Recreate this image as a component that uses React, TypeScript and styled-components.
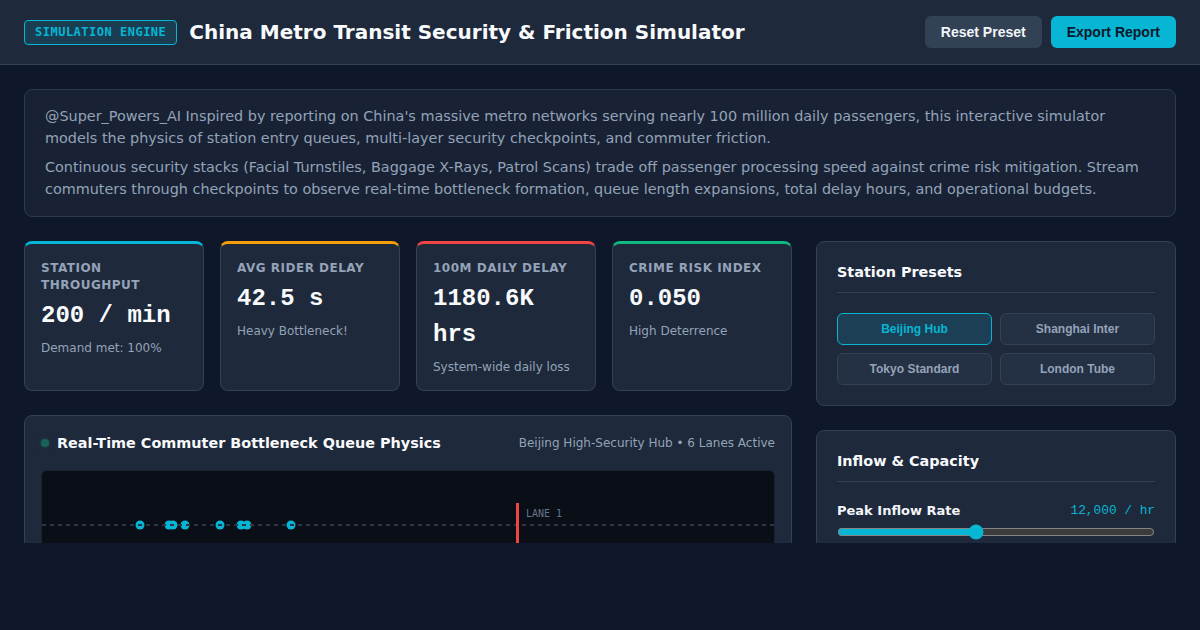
import React from "react";
import styled, { createGlobalStyle } from "styled-components";

const GlobalStyle = createGlobalStyle`
  html, body {
    margin: 0;
    padding: 0;
    background: #0f172a;
    font-family: "DejaVu Sans", sans-serif;
  }
  * { box-sizing: border-box; }
`;

const stats = [
  { label: "Station Throughput", value: "200 / min", sub: "Demand met: 100%", accent: "#06b6d4" },
  { label: "Avg Rider Delay", value: "42.5 s", sub: "Heavy Bottleneck!", accent: "#f59e0b" },
  { label: "100M Daily Delay", value: "1180.6K hrs", sub: "System-wide daily loss", accent: "#ef4444" },
  { label: "Crime Risk Index", value: "0.050", sub: "High Deterrence", accent: "#10b981" },
];

const presets = ["Beijing Hub", "Shanghai Inter", "Tokyo Standard", "London Tube"];

// queue dots on lane 1, x offsets inside the canvas
const riders = [98, 127, 131, 143, 178, 199, 205, 249];

export default function App() {
  return (
    <Page>
      <GlobalStyle />
      <Header>
        <HeaderLeft>
          <Badge>SIMULATION ENGINE</Badge>
          <Title>China Metro Transit Security &amp; Friction Simulator</Title>
        </HeaderLeft>
        <HeaderActions>
          <HeaderButton>Reset Preset</HeaderButton>
          <HeaderButton $primary>Export Report</HeaderButton>
        </HeaderActions>
      </Header>

      <Main>
        <Intro>
          <p>
            @Super_Powers_AI Inspired by reporting on China's massive metro networks serving nearly 100 million daily
            passengers, this interactive simulator models the physics of station entry queues, multi-layer security
            checkpoints, and commuter friction.
          </p>
          <p>
            Continuous security stacks (Facial Turnstiles, Baggage X-Rays, Patrol Scans) trade off passenger processing
            speed against crime risk mitigation. Stream commuters through checkpoints to observe real-time bottleneck
            formation, queue length expansions, total delay hours, and operational budgets.
          </p>
        </Intro>

        <Layout>
          <LeftCol>
            <StatGrid>
              {stats.map((s) => (
                <StatCard key={s.label} $accent={s.accent}>
                  <StatLabel>{s.label}</StatLabel>
                  <StatValue>{s.value}</StatValue>
                  <StatSub>{s.sub}</StatSub>
                </StatCard>
              ))}
            </StatGrid>

            <Panel>
              <QueueHead>
                <QueueTitle>
                  <LiveDot />
                  Real-Time Commuter Bottleneck Queue Physics
                </QueueTitle>
                <QueueMeta>Beijing High-Security Hub • 6 Lanes Active</QueueMeta>
              </QueueHead>
              <Canvas>
                <svg width="732" height="200">
                  {riders.map((x, i) => (
                    <circle key={i} cx={x} cy={54} r={4.5} fill="#06b6d4" />
                  ))}
                  <line x1={0} y1={54} x2={732} y2={54} stroke="#2b3545" strokeWidth={2} strokeDasharray="4 4" />
                  <rect x={474} y={32} width={3} height={170} fill="#ef4444" />
                  <LaneText x={484} y={46}>LANE 1</LaneText>
                </svg>
              </Canvas>
            </Panel>
          </LeftCol>

          <RightCol>
            <SidePanel>
              <PanelTitle>Station Presets</PanelTitle>
              <PresetGrid>
                {presets.map((p, i) => (
                  <PresetButton key={p} $active={i === 0}>
                    {p}
                  </PresetButton>
                ))}
              </PresetGrid>
            </SidePanel>

            <SidePanel>
              <PanelTitle>Inflow &amp; Capacity</PanelTitle>
              <ControlRow>
                <ControlLabel>Peak Inflow Rate</ControlLabel>
                <ControlValue>12,000 / hr</ControlValue>
              </ControlRow>
              <Slider type="range" min={2000} max={25000} step={500} defaultValue={12000} />
            </SidePanel>
          </RightCol>
        </Layout>
      </Main>
    </Page>
  );
}

const Page = styled.div`
  height: 543px;
  overflow: hidden;
  background: #0f172a;
  color: #f1f5f9;
`;

const Header = styled.header`
  display: flex;
  align-items: center;
  justify-content: space-between;
  height: 65px;
  padding: 0 24px;
  background: #1e293b;
  border-bottom: 1px solid #334155;
`;

const HeaderLeft = styled.div`
  display: flex;
  align-items: center;
  gap: 12px;
`;

const Badge = styled.span`
  font-family: "DejaVu Sans Mono", monospace;
  font-size: 12px;
  font-weight: bold;
  letter-spacing: 0.5px;
  color: #06b6d4;
  background: rgba(6, 182, 212, 0.15);
  border: 1px solid #06b6d4;
  border-radius: 4px;
  padding: 4px 10px;
  line-height: 15px;
`;

const Title = styled.h1`
  margin: 0;
  font-size: 20px;
  font-weight: bold;
  color: #f8fafc;
`;

const HeaderActions = styled.div`
  display: flex;
  gap: 9px;
`;

const HeaderButton = styled.button<{ $primary?: boolean }>`
  font-family: "Liberation Sans", Arial, sans-serif;
  font-size: 14px;
  font-weight: bold;
  line-height: 16px;
  padding: 8px 16px;
  border: none;
  border-radius: 6px;
  background: ${(p) => (p.$primary ? "#06b6d4" : "#334155")};
  color: ${(p) => (p.$primary ? "#0f172a" : "#f1f5f9")};
`;

const Main = styled.main`
  padding: 24px;
  display: flex;
  flex-direction: column;
  gap: 24px;
`;

const Intro = styled.section`
  background: #182234;
  border: 1px solid #2b3a50;
  border-radius: 8px;
  padding: 15px 20px 16px;
  color: #94a3b8;
  font-size: 14.4px;
  line-height: 22px;

  p {
    margin: 0;
  }
  p + p {
    margin-top: 7px;
  }
`;

const Layout = styled.div`
  display: grid;
  grid-template-columns: 1fr 360px;
  gap: 24px;
`;

const LeftCol = styled.div`
  display: flex;
  flex-direction: column;
  gap: 24px;
`;

const RightCol = styled.div`
  display: flex;
  flex-direction: column;
  gap: 24px;
`;

const StatGrid = styled.div`
  display: grid;
  grid-template-columns: repeat(4, 1fr);
  gap: 16px;
`;

const StatCard = styled.div<{ $accent: string }>`
  height: 150px;
  background: #1e293b;
  border: 1px solid #334155;
  border-top: 3px solid ${(p) => p.$accent};
  border-radius: 8px;
  padding: 16px 16px 13px;
`;

const StatLabel = styled.div`
  font-size: 12px;
  font-weight: bold;
  letter-spacing: 0.5px;
  line-height: 17px;
  text-transform: uppercase;
  color: #94a3b8;
`;

const StatValue = styled.div`
  font-family: "Liberation Mono", "Courier New", monospace;
  font-size: 24px;
  font-weight: bold;
  line-height: 36px;
  margin-top: 4px;
  color: #f8fafc;
`;

const StatSub = styled.div`
  font-size: 12px;
  line-height: 18px;
  margin-top: 5px;
  color: #94a3b8;
`;

const Panel = styled.section`
  background: #1e293b;
  border: 1px solid #334155;
  border-radius: 8px;
  padding: 16px;
`;

const QueueHead = styled.div`
  display: flex;
  align-items: center;
  justify-content: space-between;
  height: 22px;
  margin-bottom: 16px;
`;

const QueueTitle = styled.h2`
  display: flex;
  align-items: center;
  gap: 8px;
  margin: 0;
  font-size: 14.4px;
  font-weight: bold;
  color: #f8fafc;
`;

const LiveDot = styled.span`
  width: 8px;
  height: 8px;
  border-radius: 50%;
  background: #10b981;
  opacity: 0.4;
  box-shadow: 0 0 4px rgba(16, 185, 129, 0.5);
`;

const QueueMeta = styled.span`
  font-size: 12px;
  color: #94a3b8;
`;

const Canvas = styled.div`
  background: #0a0e17;
  border: 1px solid #1a2333;
  border-radius: 6px;
  height: 200px;
  overflow: hidden;

  svg {
    display: block;
  }
`;

const LaneText = styled.text`
  font-family: "DejaVu Sans Mono", monospace;
  font-size: 10px;
  fill: #64748b;
`;

const SidePanel = styled.section`
  background: #1e293b;
  border: 1px solid #334155;
  border-radius: 8px;
  padding: 20px;
`;

const PanelTitle = styled.h3`
  margin: 0 0 20px;
  padding-bottom: 10px;
  border-bottom: 1px solid #334155;
  font-size: 14.4px;
  font-weight: bold;
  line-height: 20px;
  color: #f8fafc;
`;

const PresetGrid = styled.div`
  display: grid;
  grid-template-columns: 1fr 1fr;
  gap: 8px;
`;

const PresetButton = styled.button<{ $active?: boolean }>`
  height: 32px;
  font-family: "Liberation Sans", Arial, sans-serif;
  font-size: 12px;
  font-weight: bold;
  border-radius: 6px;
  border: 1px solid ${(p) => (p.$active ? "#06b6d4" : "#334155")};
  background: ${(p) => (p.$active ? "#1c3f55" : "#243044")};
  color: ${(p) => (p.$active ? "#06b6d4" : "#94a3b8")};
`;

const ControlRow = styled.div`
  display: flex;
  align-items: center;
  justify-content: space-between;
  line-height: 18px;
`;

const ControlLabel = styled.span`
  font-size: 13px;
  font-weight: bold;
  color: #f1f5f9;
`;

const ControlValue = styled.span`
  font-family: "Liberation Mono", "Courier New", monospace;
  font-size: 12.8px;
  color: #06b6d4;
`;

const Slider = styled.input`
  display: block;
  width: 100%;
  margin: 4px 0 0;
  accent-color: #06b6d4;
`;
